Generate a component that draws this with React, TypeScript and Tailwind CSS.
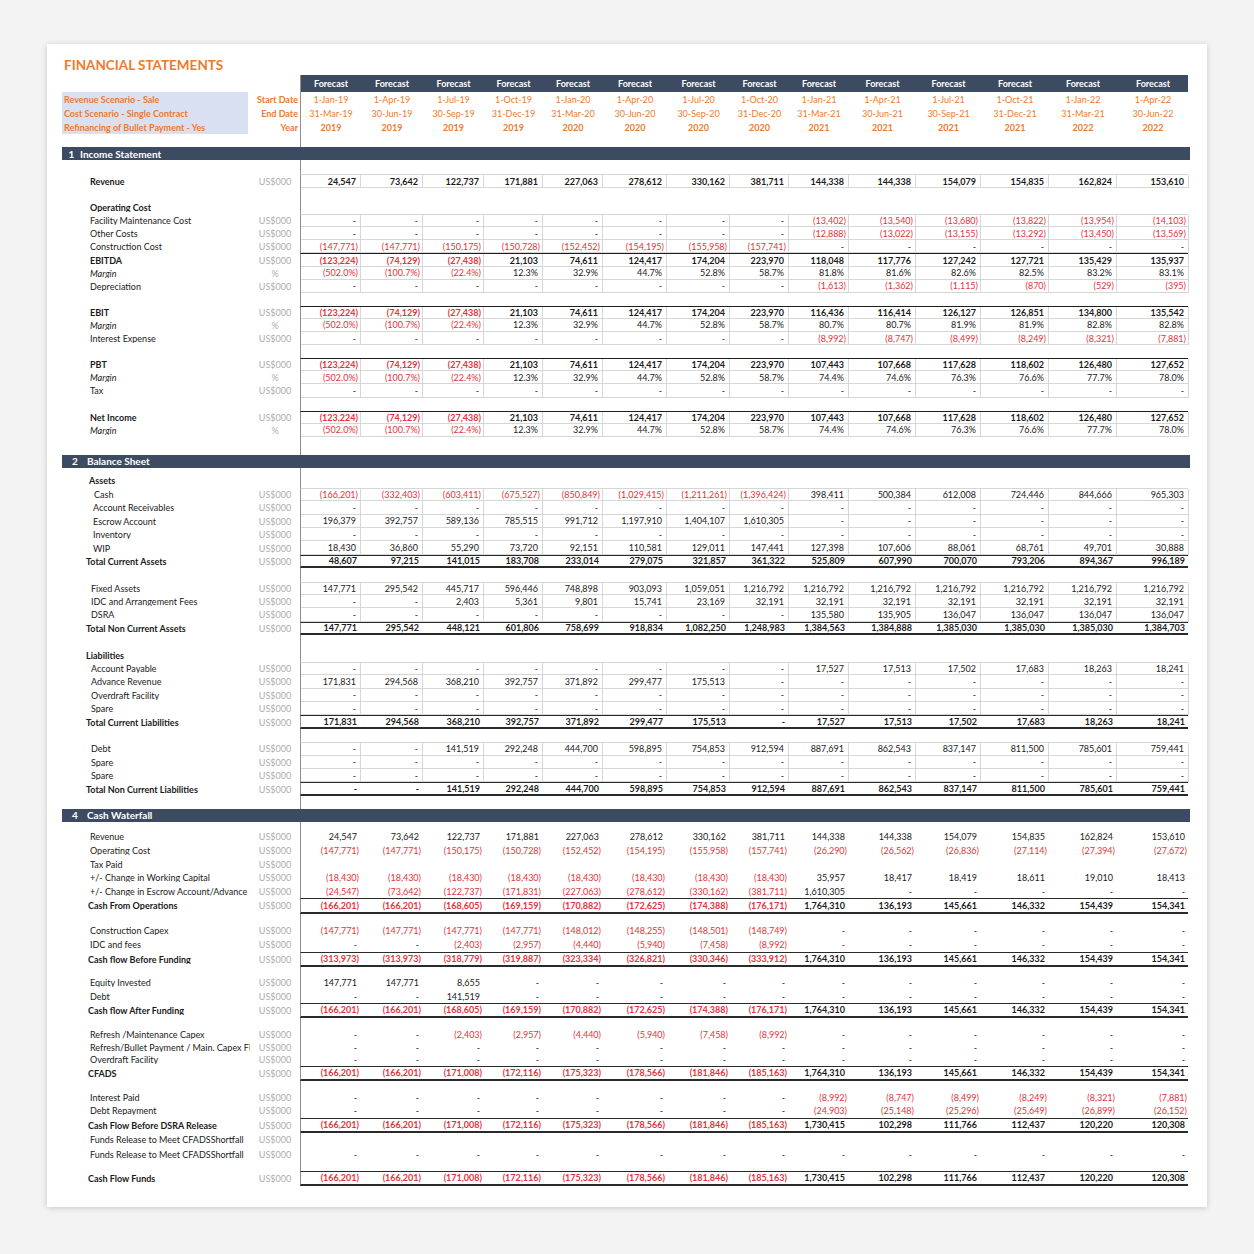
import React from "react";
import clsx from "clsx";

const COLS =
  "grid-cols-[60px_62px_61px_59px_60px_64px_63px_59px_60px_67px_65px_68px_68px_72px]";

const dash = (n: number) => Array(n).fill("-") as string[];
const blank = (n: number) => Array(n).fill("") as string[];

const startDates = ["1-Jan-19", "1-Apr-19", "1-Jul-19", "1-Oct-19", "1-Jan-20", "1-Apr-20", "1-Jul-20", "1-Oct-20", "1-Jan-21", "1-Apr-21", "1-Jul-21", "1-Oct-21", "1-Jan-22", "1-Apr-22"];
const endDates = ["31-Mar-19", "30-Jun-19", "30-Sep-19", "31-Dec-19", "31-Mar-20", "30-Jun-20", "30-Sep-20", "31-Dec-20", "31-Mar-21", "30-Jun-21", "30-Sep-21", "31-Dec-21", "31-Mar-21", "30-Jun-22"];
const years = ["2019", "2019", "2019", "2019", "2020", "2020", "2020", "2020", "2021", "2021", "2021", "2021", "2022", "2022"];

const revenue = ["24,547", "73,642", "122,737", "171,881", "227,063", "278,612", "330,162", "381,711", "144,338", "144,338", "154,079", "154,835", "162,824", "153,610"];
const first8 = ["(123,224)", "(74,129)", "(27,438)", "21,103", "74,611", "124,417", "174,204", "223,970"];
const margin8 = ["(502.0%)", "(100.7%)", "(22.4%)", "12.3%", "32.9%", "44.7%", "52.8%", "58.7%"];
const pbt = [...first8, "107,443", "107,668", "117,628", "118,602", "126,480", "127,652"];
const pbtMargin = [...margin8, "74.4%", "74.6%", "76.3%", "76.6%", "77.7%", "78.0%"];
const interest = [...dash(8), "(8,992)", "(8,747)", "(8,499)", "(8,249)", "(8,321)", "(7,881)"];
const cfo = ["(166,201)", "(166,201)", "(168,605)", "(169,159)", "(170,882)", "(172,625)", "(174,388)", "(176,171)", "1,764,310", "136,193", "145,661", "146,332", "154,439", "154,341"];
const cfads = ["(166,201)", "(166,201)", "(171,008)", "(172,116)", "(175,323)", "(178,566)", "(181,846)", "(185,163)", "1,764,310", "136,193", "145,661", "146,332", "154,439", "154,341"];
const cfDsra = ["(166,201)", "(166,201)", "(171,008)", "(172,116)", "(175,323)", "(178,566)", "(181,846)", "(185,163)", "1,730,415", "102,298", "111,766", "112,437", "120,220", "120,308"];
const idc = ["-", "-", "(2,403)", "(2,957)", "(4,440)", "(5,940)", "(7,458)", "(8,992)", ...dash(6)];
const debt = ["-", "-", "141,519", "292,248", "444,700", "598,895", "754,853", "912,594", "887,691", "862,543", "837,147", "811,500", "785,601", "759,441"];

type Kind = "none" | "grid" | "gridTop" | "isTotal" | "bsTotal" | "cwTotal" | "plain";

type RowDef = {
  label?: string;
  unit?: string;
  pad?: string;
  bold?: boolean;
  italic?: boolean;
  underline?: boolean;
  values?: string[];
  kind?: Kind;
  h: string;
};

type Section = { section: string; num: string; numW: string };

const US = "US$000";
const IS_H = "h-[13.1px]";
const BS_H = "h-[13.4px]";

const incomeRows: RowDef[] = [
  { h: "h-[14px]" },
  { label: "Revenue", unit: US, pad: "pl-[28px]", bold: true, values: revenue, kind: "gridTop", h: "h-[14px]" },
  { h: IS_H },
  { label: "Operating Cost", pad: "pl-[28px]", bold: true, h: IS_H },
  { label: "Facility Maintenance Cost", unit: US, pad: "pl-[28px]", values: [...dash(8), "(13,402)", "(13,540)", "(13,680)", "(13,822)", "(13,954)", "(14,103)"], kind: "gridTop", h: IS_H },
  { label: "Other Costs", unit: US, pad: "pl-[28px]", values: [...dash(8), "(12,888)", "(13,022)", "(13,155)", "(13,292)", "(13,450)", "(13,569)"], kind: "grid", h: IS_H },
  { label: "Construction Cost", unit: US, pad: "pl-[28px]", values: ["(147,771)", "(147,771)", "(150,175)", "(150,728)", "(152,452)", "(154,195)", "(155,958)", "(157,741)", ...dash(6)], kind: "grid", h: IS_H },
  { label: "EBITDA", unit: US, pad: "pl-[28px]", bold: true, values: [...first8, "118,048", "117,776", "127,242", "127,721", "135,429", "135,937"], kind: "isTotal", h: IS_H },
  { label: "Margin", unit: "%", pad: "pl-[28px]", italic: true, values: [...margin8, "81.8%", "81.6%", "82.6%", "82.5%", "83.2%", "83.1%"], kind: "grid", h: IS_H },
  { label: "Depreciation", unit: US, pad: "pl-[28px]", values: [...dash(8), "(1,613)", "(1,362)", "(1,115)", "(870)", "(529)", "(395)"], kind: "grid", h: IS_H },
  { h: IS_H },
  { label: "EBIT", unit: US, pad: "pl-[28px]", bold: true, values: [...first8, "116,436", "116,414", "126,127", "126,851", "134,800", "135,542"], kind: "isTotal", h: IS_H },
  { label: "Margin", unit: "%", pad: "pl-[28px]", italic: true, values: [...margin8, "80.7%", "80.7%", "81.9%", "81.9%", "82.8%", "82.8%"], kind: "grid", h: IS_H },
  { label: "Interest Expense", unit: US, pad: "pl-[28px]", values: interest, kind: "grid", h: IS_H },
  { h: IS_H },
  { label: "PBT", unit: US, pad: "pl-[28px]", bold: true, values: pbt, kind: "isTotal", h: IS_H },
  { label: "Margin", unit: "%", pad: "pl-[28px]", italic: true, values: pbtMargin, kind: "grid", h: IS_H },
  { label: "Tax", unit: US, pad: "pl-[28px]", values: dash(14), kind: "grid", h: IS_H },
  { h: IS_H },
  { label: "Net Income", unit: US, pad: "pl-[28px]", bold: true, values: pbt, kind: "isTotal", h: IS_H },
  { label: "Margin", unit: "%", pad: "pl-[28px]", italic: true, values: pbtMargin, kind: "grid", h: IS_H },
  { h: "h-[18px]" },
];

const balanceRows: RowDef[] = [
  { h: "h-[6px]" },
  { label: "Assets", pad: "pl-[27px]", bold: true, underline: true, h: "h-[14px]" },
  { label: "Cash", unit: US, pad: "pl-[32px]", values: ["(166,201)", "(332,403)", "(603,411)", "(675,527)", "(850,849)", "(1,029,415)", "(1,211,261)", "(1,396,424)", "398,411", "500,384", "612,008", "724,446", "844,666", "965,303"], kind: "gridTop", h: BS_H },
  { label: "Account Receivables", unit: US, pad: "pl-[31px]", values: dash(14), kind: "grid", h: BS_H },
  { label: "Escrow Account", unit: US, pad: "pl-[31px]", values: ["196,379", "392,757", "589,136", "785,515", "991,712", "1,197,910", "1,404,107", "1,610,305", ...dash(6)], kind: "grid", h: BS_H },
  { label: "Inventory", unit: US, pad: "pl-[31px]", values: dash(14), kind: "grid", h: BS_H },
  { label: "WIP", unit: US, pad: "pl-[31px]", values: ["18,430", "36,860", "55,290", "73,720", "92,151", "110,581", "129,011", "147,441", "127,398", "107,606", "88,061", "68,761", "49,701", "30,888"], kind: "grid", h: BS_H },
  { label: "Total Current Assets", unit: US, pad: "pl-[24px]", bold: true, values: ["48,607", "97,215", "141,015", "183,708", "233,014", "279,075", "321,857", "361,322", "525,809", "607,990", "700,070", "793,206", "894,367", "996,189"], kind: "bsTotal", h: BS_H },
  { h: BS_H },
  { label: "Fixed Assets", unit: US, pad: "pl-[29px]", values: ["147,771", "295,542", "445,717", "596,446", "748,898", "903,093", "1,059,051", "1,216,792", "1,216,792", "1,216,792", "1,216,792", "1,216,792", "1,216,792", "1,216,792"], kind: "gridTop", h: BS_H },
  { label: "IDC and Arrangement Fees", unit: US, pad: "pl-[29px]", values: ["-", "-", "2,403", "5,361", "9,801", "15,741", "23,169", "32,191", "32,191", "32,191", "32,191", "32,191", "32,191", "32,191"], kind: "grid", h: BS_H },
  { label: "DSRA", unit: US, pad: "pl-[29px]", values: [...dash(8), "135,580", "135,905", "136,047", "136,047", "136,047", "136,047"], kind: "grid", h: BS_H },
  { label: "Total Non Current Assets", unit: US, pad: "pl-[24px]", bold: true, values: ["147,771", "295,542", "448,121", "601,806", "758,699", "918,834", "1,082,250", "1,248,983", "1,384,563", "1,384,888", "1,385,030", "1,385,030", "1,385,030", "1,384,703"], kind: "bsTotal", h: BS_H },
  { h: BS_H },
  { label: "Liabilities", pad: "pl-[24px]", bold: true, h: BS_H },
  { label: "Account Payable", unit: US, pad: "pl-[29px]", values: [...dash(8), "17,527", "17,513", "17,502", "17,683", "18,263", "18,241"], kind: "gridTop", h: BS_H },
  { label: "Advance Revenue", unit: US, pad: "pl-[29px]", values: ["171,831", "294,568", "368,210", "392,757", "371,892", "299,477", "175,513", ...dash(7)], kind: "grid", h: BS_H },
  { label: "Overdraft Facility", unit: US, pad: "pl-[29px]", values: dash(14), kind: "grid", h: BS_H },
  { label: "Spare", unit: US, pad: "pl-[29px]", values: dash(14), kind: "grid", h: BS_H },
  { label: "Total Current Liabilities", unit: US, pad: "pl-[24px]", bold: true, values: ["171,831", "294,568", "368,210", "392,757", "371,892", "299,477", "175,513", "-", "17,527", "17,513", "17,502", "17,683", "18,263", "18,241"], kind: "bsTotal", h: BS_H },
  { h: BS_H },
  { label: "Debt", unit: US, pad: "pl-[29px]", values: debt, kind: "gridTop", h: BS_H },
  { label: "Spare", unit: US, pad: "pl-[29px]", values: dash(14), kind: "grid", h: BS_H },
  { label: "Spare", unit: US, pad: "pl-[29px]", values: dash(14), kind: "grid", h: BS_H },
  { label: "Total Non Current Liabilities", unit: US, pad: "pl-[24px]", bold: true, values: debt, kind: "bsTotal", h: BS_H },
  { h: "h-[13px]" },
];

const cashRows: RowDef[] = [
  { h: "h-[8px]" },
  { label: "Revenue", unit: US, pad: "pl-[28px]", values: revenue, kind: "plain", h: "h-[14px]" },
  { label: "Operating Cost", unit: US, pad: "pl-[28px]", values: ["(147,771)", "(147,771)", "(150,175)", "(150,728)", "(152,452)", "(154,195)", "(155,958)", "(157,741)", "(26,290)", "(26,562)", "(26,836)", "(27,114)", "(27,394)", "(27,672)"], kind: "plain", h: "h-[14px]" },
  { label: "Tax Paid", unit: US, pad: "pl-[28px]", values: blank(14), kind: "plain", h: "h-[13px]" },
  { label: "+/- Change in Working Capital", unit: US, pad: "pl-[28px]", values: [...Array(8).fill("(18,430)"), "35,957", "18,417", "18,419", "18,611", "19,010", "18,413"], kind: "plain", h: "h-[14px]" },
  { label: "+/- Change in Escrow Account/Advance Revenue", unit: US, pad: "pl-[28px]", values: ["(24,547)", "(73,642)", "(122,737)", "(171,831)", "(227,063)", "(278,612)", "(330,162)", "(381,711)", "1,610,305", ...dash(5)], kind: "plain", h: "h-[13px]" },
  { label: "Cash From Operations", unit: US, pad: "pl-[26px]", bold: true, values: cfo, kind: "cwTotal", h: "h-[16px]" },
  { h: "h-[10px]" },
  { label: "Construction Capex", unit: US, pad: "pl-[28px]", values: ["(147,771)", "(147,771)", "(147,771)", "(147,771)", "(148,012)", "(148,255)", "(148,501)", "(148,749)", ...dash(6)], kind: "plain", h: "h-[14px]" },
  { label: "IDC and fees", unit: US, pad: "pl-[28px]", values: idc, kind: "plain", h: "h-[14px]" },
  { label: "Cash flow Before Funding", unit: US, pad: "pl-[26px]", bold: true, values: ["(313,973)", "(313,973)", "(318,779)", "(319,887)", "(323,334)", "(326,821)", "(330,346)", "(333,912)", "1,764,310", "136,193", "145,661", "146,332", "154,439", "154,341"], kind: "cwTotal", h: "h-[15px]" },
  { h: "h-[9px]" },
  { label: "Equity Invested", unit: US, pad: "pl-[28px]", values: ["147,771", "147,771", "8,655", ...dash(11)], kind: "plain", h: "h-[14px]" },
  { label: "Debt", unit: US, pad: "pl-[28px]", values: ["-", "-", "141,519", ...dash(11)], kind: "plain", h: "h-[13px]" },
  { label: "Cash flow After Funding", unit: US, pad: "pl-[26px]", bold: true, values: cfo, kind: "cwTotal", h: "h-[15px]" },
  { h: "h-[10px]" },
  { label: "Refresh /Maintenance Capex", unit: US, pad: "pl-[28px]", values: idc, kind: "plain", h: "h-[13px]" },
  { label: "Refresh/Bullet Payment / Main. Capex Flow", unit: US, pad: "pl-[28px]", values: dash(14), kind: "plain", h: "h-[13px]" },
  { label: "Overdraft Facility", unit: US, pad: "pl-[28px]", values: dash(14), kind: "plain", h: "h-[12px]" },
  { label: "CFADS", unit: US, pad: "pl-[26px]", bold: true, values: cfads, kind: "cwTotal", h: "h-[15px]" },
  { h: "h-[10px]" },
  { label: "Interest Paid", unit: US, pad: "pl-[28px]", values: interest, kind: "plain", h: "h-[13px]" },
  { label: "Debt Repayment", unit: US, pad: "pl-[28px]", values: [...dash(8), "(24,903)", "(25,148)", "(25,296)", "(25,649)", "(26,899)", "(26,152)"], kind: "plain", h: "h-[14px]" },
  { label: "Cash Flow Before DSRA Release", unit: US, pad: "pl-[26px]", bold: true, values: cfDsra, kind: "cwTotal", h: "h-[15px]" },
  { label: "Funds Release to Meet CFADSShortfall", unit: US, pad: "pl-[28px]", values: blank(14), kind: "plain", h: "h-[14px]" },
  { label: "Funds Release to Meet CFADSShortfall", unit: US, pad: "pl-[28px]", values: dash(14), kind: "plain", h: "h-[16px]" },
  { h: "h-[8px]" },
  { label: "Cash Flow Funds", unit: US, pad: "pl-[26px]", bold: true, values: cfDsra, kind: "cwTotal", h: "h-[15px]" },
];

const LINE = "border-l border-l-[#8f8f8f]";

function Cell({ v, bold, lines }: { v: string; bold?: boolean; lines?: boolean }) {
  const neg = v.startsWith("(");
  return (
    <div
      className={clsx(
        "flex items-center justify-end whitespace-nowrap",
        neg ? "pr-[2px] text-[#e5323b]" : "pr-[4px]",
        bold && "font-bold",
        lines && "border-r border-b border-[#d6d6d6]"
      )}
    >
      {v}
    </div>
  );
}

function Row({ r }: { r: RowDef }) {
  const kind = r.kind ?? "none";
  const lines = kind === "grid" || kind === "gridTop" || kind === "isTotal";
  return (
    <div className={clsx("flex", r.h)}>
      <div className="flex w-[238px] items-center">
        <div
          className={clsx(
            "flex-1 overflow-hidden whitespace-nowrap",
            r.pad,
            r.bold && "font-bold",
            r.italic && "italic",
            r.underline && "underline"
          )}
        >
          {r.label}
        </div>
        <div className="w-[50px] text-center text-[#adadad]">{r.unit}</div>
      </div>
      <div
        className={clsx(
          "w-[888px]",
          LINE,
          kind === "gridTop" && "border-t border-t-[#d6d6d6]",
          kind === "isTotal" && "border-t-[1.5px] border-t-[#1e1e1e]",
          (kind === "bsTotal" || kind === "cwTotal") &&
            "border-t-[1.5px] border-b-2 border-t-[#2a2a2a] border-b-[#2a2a2a]"
        )}
      >
        {r.values && (
          <div className={clsx("grid h-full", COLS)}>
            {r.values.map((v, i) => (
              <Cell key={i} v={v} bold={r.bold && !r.italic} lines={lines} />
            ))}
          </div>
        )}
      </div>
    </div>
  );
}

function SectionBar({ s }: { s: Section }) {
  return (
    <div className="flex h-[13px] w-[1128px] items-center bg-[#3d4b62] text-[10px] font-bold text-white">
      <span className={clsx("text-center", s.numW)}>{s.num}</span>
      <span>{s.section}</span>
    </div>
  );
}

function DateRow({ items, bold }: { items: string[]; bold?: boolean }) {
  return (
    <div className={clsx("grid h-[14px] items-center text-[#ee7a2e]", COLS, bold && "font-bold")}>
      {items.map((d, i) => (
        <div key={i} className="text-center">
          {d}
        </div>
      ))}
    </div>
  );
}

export default function App() {
  return (
    <div className="h-[1254px] w-[1254px] bg-[#f3f3f3] pl-[47px] pt-[44px] font-['Lato','Open_Sans',sans-serif]">
      <div className="h-[1163px] w-[1160px] bg-white pl-[15px] text-[9px] leading-none text-[#1a1a1a] shadow-[0_1px_6px_rgba(0,0,0,0.18)]">
        <div className="h-[31px] pl-[2px] pt-[13px] text-[13.5px] font-bold leading-[16px] text-[#ee7a2e]">
          FINANCIAL STATEMENTS
        </div>

        {/* header */}
        <div className="flex h-[17px]">
          <div className="w-[238px]" />
          <div className={clsx("grid w-[888px] items-center bg-[#3d4b62] font-bold text-white", COLS, LINE)}>
            {startDates.map((_, i) => (
              <div key={i} className="text-center">
                Forecast
              </div>
            ))}
          </div>
        </div>
        <div className="flex h-[42px]">
          <div className="flex w-[186px] flex-col bg-[#d8e0f1] pl-[2px] font-bold text-[#ee7a2e]">
            <div className="flex h-[14px] items-center">Revenue Scenario - Sale</div>
            <div className="flex h-[14px] items-center">Cost Scenario - Single Contract</div>
            <div className="flex h-[14px] items-center">Refinancing of Bullet Payment - Yes</div>
          </div>
          <div className="flex w-[52px] flex-col pr-[2px] text-right font-bold text-[#ee7a2e]">
            <div className="flex h-[14px] items-center justify-end whitespace-nowrap">Start Date</div>
            <div className="flex h-[14px] items-center justify-end whitespace-nowrap">End Date</div>
            <div className="flex h-[14px] items-center justify-end">Year</div>
          </div>
          <div className={clsx("w-[888px]", LINE)}>
            <DateRow items={startDates} />
            <DateRow items={endDates} />
            <DateRow items={years} bold />
          </div>
        </div>
        <div className="flex h-[13px]">
          <div className="w-[238px]" />
          <div className={clsx("w-[888px]", LINE)} />
        </div>

        <SectionBar s={{ section: "Income Statement", num: "1", numW: "w-[18px] pl-[1px]" }} />
        {incomeRows.map((r, i) => (
          <Row key={i} r={r} />
        ))}

        <SectionBar s={{ section: "Balance Sheet", num: "2", numW: "w-[25px] pl-[1px]" }} />
        {balanceRows.map((r, i) => (
          <Row key={i} r={r} />
        ))}

        <SectionBar s={{ section: "Cash Waterfall", num: "4", numW: "w-[25px] pl-[1px]" }} />
        {cashRows.map((r, i) => (
          <Row key={i} r={r} />
        ))}
      </div>
    </div>
  );
}
